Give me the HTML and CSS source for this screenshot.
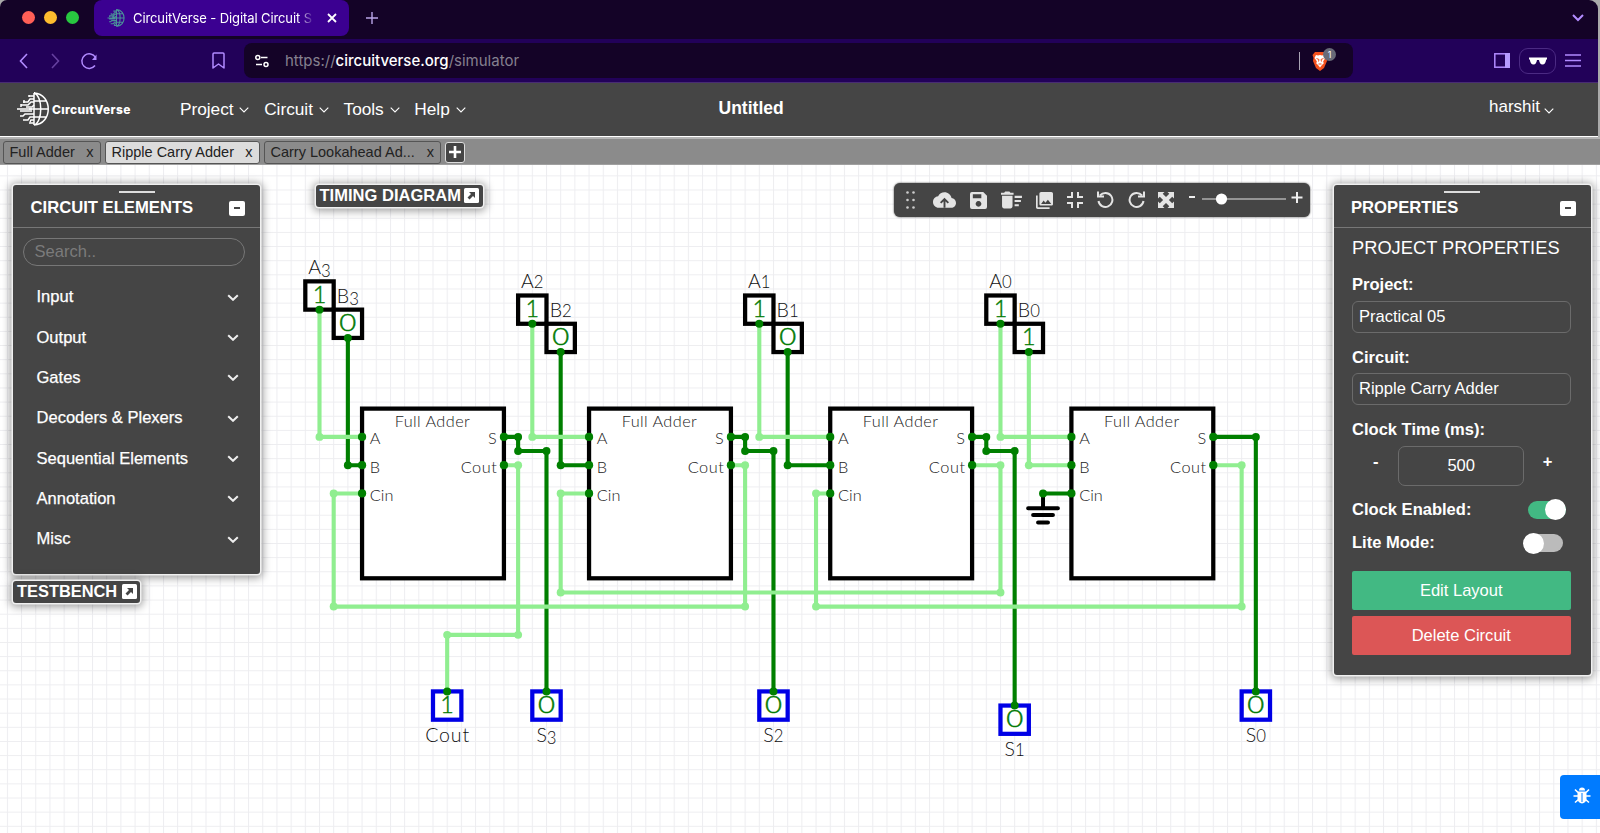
FILE: index.html
```html
<!DOCTYPE html>
<html lang="en">
<head>
<meta charset="utf-8">
<title>CircuitVerse - Digital Circuit Simulator</title>
<link rel="stylesheet" href="styles.css">
</head>
<body>
<div class="window">
  <div class="tabstrip">
    <div class="lights"><i class="red"></i><i class="yellow"></i><i class="green"></i></div>
    <div class="browser-tab">
      <svg class="favicon" width="18" height="18" viewBox="0 0 32 34" fill="none" stroke="#4b9299" stroke-width="2"><use href="#globe"/></svg>
      <span class="tab-title">CircuitVerse - Digital Circuit S</span>
      <svg width="10" height="10" viewBox="0 0 10 10" stroke="#fff" stroke-width="1.8"><path d="M1 1l8 8M9 1L1 9"/></svg>
    </div>
    <svg class="newtab" width="12" height="12" viewBox="0 0 12 12" stroke="#b9a5e8" stroke-width="1.4"><path d="M6 0v12M0 6h12"/></svg>
    <svg class="tabmenu" width="12" height="8" viewBox="0 0 12 8" fill="none" stroke="#b38cff" stroke-width="2"><path d="M1 1l5 5 5-5"/></svg>
  </div>
  <div class="navbar">
    <svg class="nav-back" width="9" height="16" viewBox="0 0 9 16" fill="none" stroke="#b18aff" stroke-width="1.6"><path d="M8 1L1.500 8 8 15"/></svg>
    <svg class="nav-fwd" width="9" height="16" viewBox="0 0 9 16" fill="none" stroke="#65409f" stroke-width="1.6"><path d="M1 1l6.500 7L1 15"/></svg>
    <svg class="nav-reload" width="18" height="18" viewBox="0 0 18 18" fill="none" stroke="#b18aff" stroke-width="1.5"><path d="M15 13.500A7.300 7.300 0 1 1 15.500 5.500"/><path d="M16.500 2.500v5.500h-4.500z" fill="#b18aff" stroke="none"/></svg>
    <svg class="nav-mark" width="13" height="17" viewBox="0 0 13 17" fill="none" stroke="#b18aff" stroke-width="1.5" stroke-linejoin="round"><path d="M1 2a1 1 0 0 1 1-1h9a1 1 0 0 1 1 1v14l-5.500-4L1 16z"/></svg>
    <div class="address">
      <svg width="14" height="14" viewBox="0 0 14 14" fill="none" stroke="#fff" stroke-width="1.5"><circle cx="2.800" cy="3.500" r="2"/><path d="M6 3.500h6.500M1 10.500h6"/><circle cx="11" cy="10.500" r="2"/></svg>
      <span class="url">https://<b>circuitverse.org</b>/simulator</span>
      <i class="sep"></i>
      <div class="shield">
        <svg width="16" height="20" viewBox="0 0 16 20"><path d="M3 1h10l2.500 3-1 3 .5 3-3 7-4 3-4-3-3-7 .5-3-1-3z" fill="#f4511e"/><path d="M4 4l2 .5L8 4l2 .5 2-.5 1.500 3L12 9l-1 2 1 1-2 2-2 2.500L6 14l-2-2 1-1-1-2-1.500-2z" fill="#fff"/><path d="M4.500 7.500l2.500 1-.5 2M11.500 7.500l-2.500 1 .5 2M6.500 13h3" stroke="#f4511e" fill="none"/></svg>
        <span class="badge">1</span>
      </div>
    </div>
    <svg class="sidebar-ic" width="16" height="15" viewBox="0 0 16 15"><rect x=".8" y=".8" width="14.400" height="13.400" fill="none" stroke="#b18aff" stroke-width="1.500"/><path d="M11 0h5v15h-5z" fill="#b69aff"/></svg>
    <span class="private"><svg width="18" height="8" viewBox="0 0 18 8" fill="#fff"><path d="M0 .5h18v2h-.8c-.4 3-1.500 5-3.700 5S10.500 5.500 10 3H8c-.5 2.500-1.300 4.500-3.500 4.500S1.200 5.500.8 2.500H0z"/></svg></span>
    <svg class="burger" width="16" height="13" viewBox="0 0 16 13" stroke="#b18aff" stroke-width="1.500"><path d="M0 1h16M0 6.500h16M0 12h16"/></svg>
  </div>
  <header class="header">
    <svg class="logo" width="32" height="34" viewBox="0 0 32 34" fill="none" stroke="#fff" stroke-width="1.500">
      <defs><g id="globe">
        <path d="M17 1v32M17 1c19 1 19 31 0 32M17 1c9 3 9 29 0 32M17 9h12M12 17h19M17 25h12"/>
        <path d="M17 4h-5M17 7h-4l-2 3H6M17 10h-3l-3 3H4M17 13l-2 2H9M15 17H0M15 19H3M17 22H8l-2 2H3M17 25h-4l-2 3H6M17 28h-3l-1 2M17 31h-5M12 3v2M7 8v3M4 12v3"/>
      </g></defs>
      <use href="#globe"/>
    </svg>
    <span class="brand">CırcuıtVerse</span>
    <nav class="menu">
      <span>Project<svg class="caret"><use href="#car"/></svg></span><span>Circuit<svg class="caret"><use href="#car"/></svg></span><span>Tools<svg class="caret"><use href="#car"/></svg></span><span>Help<svg class="caret"><use href="#car"/></svg></span>
    </nav>
    <strong class="doc-title">Untitled</strong>
    <span class="user">harshit<svg class="caret"><use href="#car"/></svg></span>
    <svg width="0" height="0"><defs><path id="car" d="M.7 .7l4.300 4.300L9.300 .7" fill="none" stroke="#fff" stroke-width="1.100"/><path id="chev" d="M1.200 1.200L6 5.800l4.800-4.600" fill="none" stroke="#eee" stroke-width="2"/></defs></svg>
  </header>
</div>

<div class="circuit-tabs">
  <div class="ctab"><span>Full Adder</span><span>x</span></div>
  <div class="ctab active"><span>Ripple Carry Adder</span><span>x</span></div>
  <div class="ctab wide"><span>Carry Lookahead Ad...</span><span>x</span></div>
  <button class="add"><svg width="12" height="12" viewBox="0 0 12 12" stroke="#fff" stroke-width="2.600"><path d="M6 0v12M0 6h12"/></svg></button>
</div>

<main class="workspace">
  <svg class="canvas" width="1600" height="668" viewBox="0 165 1600 668">
    <defs>
      <pattern id="grid" width="14.187" height="14.140" x="6.900" y="5.700" patternUnits="userSpaceOnUse"><path d="M.5 0v14.140M0 .5h14.187" stroke="#ededf0" fill="none"/></pattern>
      <g id="adder">
        <rect x="0" y="-20" width="100" height="120" fill="#fff" stroke="#000" stroke-width="3"/>
        <g class="pin"><text x="49.500" y="-7" text-anchor="middle" textLength="53">Full Adder</text><text x="5.500" y="5.300">A</text><text x="5.500" y="25.300">B</text><text x="5.500" y="45.300">Cin</text><text x="95" y="5.300" text-anchor="end">S</text><text x="95" y="25.300" text-anchor="end" textLength="25.500">Cout</text></g>
      </g>
      <g id="pins" fill="#008000"><circle r="2.900"/><circle cy="20" r="2.900"/><circle cy="40" r="2.900"/><circle cx="100" r="2.900"/><circle cx="100" cy="20" r="2.900"/></g>
      <g id="one" class="value"><text x="-4.800" y="5" textLength="9.600" lengthAdjust="spacingAndGlyphs">1</text></g>
      <g id="zero" class="value"><text x="-6" y="5" textLength="12" lengthAdjust="spacingAndGlyphs">0</text></g>
      <rect id="box" x="-10" y="-10" width="20" height="20" stroke-width="3"/>
    </defs>
    <rect y="165" width="1600" height="668" fill="url(#grid)"/>
    <g transform="translate(532.300 436.900) scale(1.4187 1.414)">
      <use href="#adder" x="-120"/><use href="#adder" x="40"/><use href="#adder" x="210"/><use href="#adder" x="380"/>
      <g fill="#fff" stroke="#000">
        <use href="#box" x="-150" y="-100"/><use href="#box" x="-130" y="-80"/>
        <use href="#box" x="0" y="-90"/><use href="#box" x="20" y="-70"/>
        <use href="#box" x="160" y="-90"/><use href="#box" x="180" y="-70"/>
        <use href="#box" x="330" y="-90"/><use href="#box" x="350" y="-70"/>
      </g>
      <g fill="#fff" stroke="#0000e6">
        <use href="#box" x="-60" y="190"/><use href="#box" x="10" y="190"/><use href="#box" x="170" y="190"/><use href="#box" x="340" y="200"/><use href="#box" x="510" y="190"/>
      </g>
      <g class="wire low">
        <path d="M-130-70V20H-120M20-60V20H40M180-60V20H210M-20 0H-10V10H10V180M140 0H150V10H170V180M310 0H320V10H340V190M480 0H510V180M360 40H380"/>
      </g>
      <g class="wire high">
        <path d="M-150-90V0H-120M0-80V0H40M160-80V0H210M330-80V0H380M350-60V20H380"/>
        <path d="M-20 20H-10V140H-60V180M140 20H150V120H-140V40H-120M310 20H330V110H20V40H40M480 20H500V120H200V40H210"/>
      </g>
      <path d="M360 40v10M349.500 50.500h21M353 55.300h14M356.500 60.500h7" stroke="#000" stroke-width="2.800" stroke-linecap="round"/>
      <g fill="#90ee90">
        <circle cx="-150" r="2.800"/><circle r="2.800"/><circle cx="160" r="2.800"/><circle cx="330" r="2.800"/><circle cx="350" cy="20" r="2.800"/>
        <circle cx="-10" cy="20" r="2.800"/><circle cx="-10" cy="140" r="2.800"/><circle cx="-60" cy="140" r="2.800"/>
        <circle cx="150" cy="20" r="2.800"/><circle cx="150" cy="120" r="2.800"/><circle cx="-140" cy="120" r="2.800"/><circle cx="-140" cy="40" r="2.800"/>
        <circle cx="330" cy="20" r="2.800"/><circle cx="330" cy="110" r="2.800"/><circle cx="20" cy="110" r="2.800"/><circle cx="20" cy="40" r="2.800"/>
        <circle cx="500" cy="20" r="2.800"/><circle cx="500" cy="120" r="2.800"/><circle cx="200" cy="120" r="2.800"/><circle cx="200" cy="40" r="2.800"/>
      </g>
      <use href="#pins" x="-120"/><use href="#pins" x="40"/><use href="#pins" x="210"/><use href="#pins" x="380"/>
      <g fill="#008000">
        <circle cx="-150" cy="-90" r="2.800"/><circle cx="-130" cy="-70" r="2.800"/><circle cy="-80" r="2.800"/><circle cx="20" cy="-60" r="2.800"/><circle cx="160" cy="-80" r="2.800"/><circle cx="180" cy="-60" r="2.800"/><circle cx="330" cy="-80" r="2.800"/><circle cx="350" cy="-60" r="2.800"/>
        <circle cx="-130" cy="20" r="2.800"/><circle cx="20" cy="20" r="2.800"/><circle cx="180" cy="20" r="2.800"/><circle cx="360" cy="40" r="2.800"/><circle cx="510" r="2.800"/>
        <circle cx="-10" r="2.800"/><circle cx="-10" cy="10" r="2.800"/><circle cx="10" cy="10" r="2.800"/>
        <circle cx="150" r="2.800"/><circle cx="150" cy="10" r="2.800"/><circle cx="170" cy="10" r="2.800"/>
        <circle cx="320" r="2.800"/><circle cx="320" cy="10" r="2.800"/><circle cx="340" cy="10" r="2.800"/>
        <circle cx="-60" cy="180" r="2.800"/><circle cx="10" cy="180" r="2.800"/><circle cx="170" cy="180" r="2.800"/><circle cx="340" cy="190" r="2.800"/><circle cx="510" cy="180" r="2.800"/>
      </g>
      <use href="#one" x="-150" y="-100"/><use href="#zero" x="-130" y="-80"/><use href="#one" x="0" y="-90"/><use href="#zero" x="20" y="-70"/>
      <use href="#one" x="160" y="-90"/><use href="#zero" x="180" y="-70"/><use href="#one" x="330" y="-90"/><use href="#one" x="350" y="-70"/>
      <use href="#one" x="-60" y="190"/><use href="#zero" x="10" y="190"/><use href="#zero" x="170" y="190"/><use href="#zero" x="340" y="200"/><use href="#zero" x="510" y="190"/>
      <g class="label">
        <text x="-150" y="-115">A<tspan class="d" dy="2">3</tspan></text><text x="-130" y="-95">B<tspan class="d" dy="2">3</tspan></text>
        <text x="0" y="-105">A<tspan class="d">2</tspan></text><text x="20" y="-85">B<tspan class="d">2</tspan></text>
        <text x="160" y="-105">A<tspan class="d">1</tspan></text><text x="180" y="-85">B<tspan class="d">1</tspan></text>
        <text x="330" y="-105">A<tspan class="d">0</tspan></text><text x="350" y="-85">B<tspan class="d">0</tspan></text>
        <text x="-60" y="215.500" textLength="31">Cout</text><text x="10" y="215.500">S<tspan class="d" dy="2">3</tspan></text><text x="170" y="215.500">S<tspan class="d">2</tspan></text><text x="340" y="225.500">S<tspan class="d">1</tspan></text><text x="510" y="215.500">S<tspan class="d">0</tspan></text>
      </g>
    </g>
  </svg>

  <section class="panel elements">
    <i class="grip"></i>
    <div class="panel-head"><span>CIRCUIT ELEMENTS</span><i class="min"></i></div>
    <div class="search">Search..</div>
    <ul>
      <li>Input<svg class="chev"><use href="#chev"/></svg></li>
      <li>Output<svg class="chev"><use href="#chev"/></svg></li>
      <li>Gates<svg class="chev"><use href="#chev"/></svg></li>
      <li>Decoders &amp; Plexers<svg class="chev"><use href="#chev"/></svg></li>
      <li>Sequential Elements<svg class="chev"><use href="#chev"/></svg></li>
      <li>Annotation<svg class="chev"><use href="#chev"/></svg></li>
      <li>Misc<svg class="chev"><use href="#chev"/></svg></li>
    </ul>
  </section>
  <div class="panel mini testbench">TESTBENCH<svg width="15" height="15" viewBox="0 0 15 15"><rect width="15" height="15" rx="1.500" fill="#fff"/><path d="M5 4h6v6L9 8l-3.500 3.500-2-2L7 6z" fill="#454545"/></svg></div>
  <div class="panel mini timing">TIMING DIAGRAM<svg width="15" height="15" viewBox="0 0 15 15"><rect width="15" height="15" rx="1.500" fill="#fff"/><path d="M5 4h6v6L9 8l-3.500 3.500-2-2L7 6z" fill="#454545"/></svg></div>

  <div class="quick">
    <svg class="dots" width="9" height="18" viewBox="0 0 9 18" fill="#ccc"><circle cx="1.500" cy="1.500" r="1.300"/><circle cx="7.500" cy="1.500" r="1.300"/><circle cx="1.500" cy="9" r="1.300"/><circle cx="7.500" cy="9" r="1.300"/><circle cx="1.500" cy="16.500" r="1.300"/><circle cx="7.500" cy="16.500" r="1.300"/></svg>
    <svg width="23" height="18" viewBox="0 3 24 18"><path d="M19.350 10.040C18.670 6.590 15.640 4 12 4 9.110 4 6.600 5.640 5.350 8.040 2.340 8.360 0 10.910 0 14c0 3.310 2.690 6 6 6h13c2.760 0 5-2.240 5-5 0-2.640-2.050-4.780-4.650-4.960z"/><path d="M12 20v-8M8 15l4-4 4 4" fill="none" stroke="#454545" stroke-width="2"/></svg>
    <svg width="17" height="17" viewBox="3 3 18 18"><path fill-rule="evenodd" d="M3 5a2 2 0 0 1 2-2h12l4 4v12a2 2 0 0 1-2 2H5a2 2 0 0 1-2-2zM6 5.500v4h9v-4zM12 12.500a3 3 0 1 0 .01 0z"/></svg>
    <svg class="sweep" width="22" height="18" viewBox="2 3.500 21 17"><path d="M15 16h4v2h-4zm0-8h7v2h-7zm0 4h6v2h-6zM3 18c0 1.100.9 2 2 2h6c1.100 0 2-.9 2-2V8H3v10zM14 5h-3l-1-1H6L5 5H2v2h12z"/></svg>
    <svg width="17" height="17" viewBox="2 2 20 20"><path d="M22 16V4c0-1.100-.9-2-2-2H8c-1.100 0-2 .9-2 2v12c0 1.100.9 2 2 2h12c1.100 0 2-.9 2-2zm-11-4l2.030 2.710L16 11l4 5H8l3-4zM2 6v14c0 1.100.9 2 2 2h14v-2H4V6H2z"/></svg>
    <svg width="16" height="16" viewBox="0 0 16 16"><path d="M5 0v5H0M11 0v5h5M5 16v-5H0M11 16v-5h5" fill="none" stroke="#e4e4e4" stroke-width="2"/></svg>
    <svg width="17" height="18" viewBox="0 0 17 18"><path d="M3 4.500A7 7 0 1 1 1.500 10" fill="none" stroke="#e4e4e4" stroke-width="2"/><path d="M0 .5h2v4h5v2H0z"/></svg>
    <svg width="17" height="18" viewBox="0 0 17 18"><path d="M14 4.500A7 7 0 1 0 15.500 10" fill="none" stroke="#e4e4e4" stroke-width="2"/><path d="M17 .5h-2v4h-5v2h7z"/></svg>
    <svg width="16" height="16" viewBox="0 0 16 16"><path d="M0 0h6.500L4.700 1.800 8 5.100l3.300-3.300L9.500 0H16v6.500l-1.800-1.800L10.900 8l3.300 3.300L16 9.500V16H9.500l1.800-1.800L8 10.900l-3.300 3.300L6.500 16H0V9.500l1.800 1.800L5.100 8 1.800 4.700 0 6.500z"/></svg>
    <svg class="zoom" width="116" height="16" viewBox="0 0 116 16"><path d="M1 7h6M103.500 7.500h11M109 2v11" stroke="#eee" stroke-width="2"/><path d="M14 9h84" stroke="#e4e4e4" stroke-width="1.200"/><circle cx="33.500" cy="9" r="5.600" fill="#fff"/></svg>
  </div>

  <section class="panel props">
    <i class="grip"></i>
    <div class="panel-head"><span>PROPERTIES</span><i class="min"></i></div>
    <div class="body">
      <h2>PROJECT PROPERTIES</h2>
      <label>Project:</label><div class="field">Practical 05</div>
      <label>Circuit:</label><div class="field">Ripple Carry Adder</div>
      <label class="ct">Clock Time (ms):</label>
      <div class="clock"><b>-</b><div class="num">500</div><b>+</b></div>
      <div class="row"><b>Clock Enabled:</b><span class="switch on"><i></i></span></div>
      <div class="row second"><b>Lite Mode:</b><span class="switch"><i></i></span></div>
      <button class="btn edit">Edit Layout</button>
      <button class="btn del">Delete Circuit</button>
    </div>
  </section>

  <button class="bug"><svg width="18" height="18" viewBox="0 0 18 18"><path d="M6 4.500a3 3 0 0 1 6 0z" fill="#fff"/><path d="M4.500 5.500h9v7a4.500 5 0 0 1-9 0z" fill="#fff"/><path d="M2 3.500l3 3M16 3.500l-3 3M.5 10h17M2 16.500l3.500-3M16 16.500l-3.500-3" stroke="#fff" stroke-width="1.600"/><path d="M9 7v9" stroke="#007bff"/></svg></button>
</main>
</body>
</html>
```
FILE: styles.css
```css
* { box-sizing: border-box; }
body { margin: 0; width: 1600px; height: 833px; overflow: hidden; background: #aaa; font-family: "Liberation Sans", Arial, sans-serif; color: #fff; }
svg { display: block; flex: none; }
ul { list-style: none; margin: 0; padding: 0; }
button { border: 0; padding: 0; color: inherit; font: inherit; }

.window { width: 1598px; height: 137px; border-bottom: 1px solid #fff; border-radius: 7px 9px 0 0; overflow: hidden; }
.tabstrip { height: 39px; display: flex; background: #140327; font-family: Inter, sans-serif; }
.lights { display: flex; gap: 8.500px; padding: 11px 0 0 22px; width: 94px; }
.lights i { width: 13.400px; height: 13.400px; border-radius: 50%; }
.red { background: #ff5f57; }
.yellow { background: #febc2e; }
.green { background: #28c840; }
.browser-tab { width: 255px; height: 36px; border-radius: 8px; background: #3b0091; display: flex; align-items: center; padding-left: 13px; }
.tab-title { margin-left: 8px; width: 183px; margin-right: 11px; font-size: 13px; letter-spacing: -.1px; white-space: nowrap; overflow: hidden; -webkit-mask-image: linear-gradient(90deg, #000 90%, transparent 99%); }
.newtab { margin: 12px 0 0 16.500px; }
.tabmenu { margin: 14px 14px 0 auto; }
.navbar { height: 44px; display: flex; align-items: center; background: #220159; border-bottom: 1px solid #482b73; }
.nav-back { margin-left: 19px; }
.nav-fwd { margin-left: 23px; }
.nav-reload { margin-left: 20px; }
.nav-mark { margin-left: 114px; }
.address { margin-left: 19px; width: 1109px; height: 35px; border-radius: 8px; background: #140327; display: flex; align-items: center; padding-left: 11px; font-family: Inter, sans-serif; }
.url { margin-left: 16px; font-size: 15px; color: #85808f; }
.url b { color: #fff; font-weight: 500; }
.sep { margin-left: auto; width: 1px; height: 18px; background: #a8a3b3; }
.shield { margin: 0 17px 0 12px; width: 24px; height: 20px; position: relative; }
.badge { position: absolute; left: 11px; top: -3px; width: 13px; height: 13px; border-radius: 50%; background: #686a78; font-size: 9px; line-height: 13px; text-align: center; }
.sidebar-ic { margin-left: 141px; }
.private { margin-left: 9px; width: 37px; height: 26px; border: 1px solid #4b2a83; border-radius: 9px; display: flex; align-items: center; justify-content: center; }
.burger { margin-left: 9px; }

.header { height: 53px; background: #454545; display: flex; align-items: center; font-size: 17.300px; position: relative; }
.logo { margin: 0 0 2px 17px; }
.brand { margin-left: 3px; width: 82px; font: 800 12px Inter, sans-serif; letter-spacing: .35px; }
.menu { display: flex; margin: 0 0 0 46px; gap: 14.800px; letter-spacing: -.03px; }
.menu span, .user { display: flex; align-items: center; }
.caret { width: 10px; height: 6px; margin-left: 5.800px; overflow: visible; }
.doc-title { margin-left: 253px; margin-top: -3px; font-size: 17.500px; }
.user { margin: -5px 44px 0 auto; font-size: 17px; }
.user .caret { margin-top: 7px; margin-left: 4px; }

.circuit-tabs { height: 28px; background: #8b8b8b; border-top: 2px solid #b4b4b4; border-bottom: 1px solid #a0a0a0; display: flex; align-items: center; gap: 4.500px; padding: 1px 0 0 3px; font-size: 14.500px; color: #222; }
.ctab { flex: none; width: 97.500px; height: 23px; border: 1.500px solid #555; border-radius: 3px; display: flex; justify-content: space-between; align-items: flex-start; line-height: 20px; padding: 0 6px 0 5.500px; white-space: nowrap; }
.ctab.active { width: 154.500px; background: #dcdcdc; }
.ctab.wide { width: 177px; }
.add { width: 20px; height: 21px; margin-left: -1px; border: 1px solid #ddd; border-radius: 3px; background: #454545; display: flex; align-items: center; justify-content: center; }

.workspace { position: relative; height: 668px; background: #fff; }
.pin text { font: 300 11.500px Lato, sans-serif; fill: #222; }
.value text { font: 300 16px Lato, sans-serif; fill: #007800; stroke: #0a7f0a; stroke-width: .3; }
.label text { font: 300 13.800px Lato, sans-serif; fill: #111; text-anchor: middle; }
.label text .d { font-size: 11.800px; }
.wire { fill: none; stroke-width: 2.900; }
.low { stroke: #007f00; }
.high { stroke: #90ee90; }

.panel { position: absolute; background: #454545; border-radius: 3px; box-shadow: 0 0 0 1.500px #f0f0f0, 0 1px 9px 3px rgba(0, 0, 0, .38); font-size: 16.550px; }
.elements { left: 13px; top: 20px; width: 247px; height: 389px; }
.props { left: 1333.500px; top: 20px; width: 257px; height: 490px; }
.grip { position: absolute; left: 50%; margin-left: -18px; top: 6px; width: 36px; height: 1.500px; background: #ddd; }
.panel-head { height: 43px; border-bottom: 1px solid #777; display: flex; justify-content: space-between; align-items: center; padding: 4px 15px 0 17.500px; font-weight: bold; font-size: 16.650px; }
.min { width: 16px; height: 15px; border-radius: 2px; background: #fff; display: flex; align-items: center; justify-content: center; }
.min::before { content: ""; width: 6px; height: 1.500px; background: #454545; }
.search { margin: 10px 15px 0 10px; height: 28px; border: 1px solid #777; border-radius: 14px; padding-left: 10.500px; line-height: 25px; color: #7b7b7b; }
.elements ul { padding: 11px 21px 0 23.500px; }
.elements li { height: 40.350px; display: flex; align-items: center; justify-content: space-between; -webkit-text-stroke: .25px #fff; }
.chev { width: 12px; height: 7px; }
.mini { display: flex; align-items: center; font-weight: bold; padding: 0 4px; white-space: nowrap; justify-content: space-between; }
.testbench { left: 13px; top: 416px; width: 126.500px; height: 21.500px; padding-right: 3px; font-size: 16.400px; }
.timing { left: 315.500px; top: 20px; width: 167.500px; height: 21.500px; }

.quick { position: absolute; left: 893.500px; top: 18px; width: 416.500px; height: 34px; border-radius: 6px; background: #454545; box-shadow: 0 0 2px #333; display: flex; align-items: center; padding: 0 6px 0 12px; justify-content: space-between; fill: #e4e4e4; }
.dots { margin-right: 5px; }
.zoom { margin: -5px 0 0 0; }

.body { padding: 0 20px 0 18.500px; }
.body h2 { margin: 8px 0 0; font-weight: normal; font-size: 18.300px; line-height: 23px; white-space: nowrap; }
.body label { display: block; font-weight: bold; height: 20px; line-height: 20px; margin: 16px 0 6px; }
.field { height: 32px; border: 1px solid #6b6b6b; border-radius: 6px; line-height: 29px; padding-left: 6px; }
.field + label { margin: 15px 0 5px; }
.field + .ct { margin: 15px 0 5.500px; }
.clock { display: flex; justify-content: space-between; padding: 0 18px 0 21px; line-height: 32px; }
.num { width: 126px; height: 40px; border: 1px solid #6b6b6b; border-radius: 7px; text-align: center; line-height: 37px; margin-left: 1px; }
.row { display: flex; justify-content: space-between; align-items: center; height: 20px; margin-top: 14px; padding-right: 5px; }
.second { margin-top: 13.500px; padding-right: 8px; }
.switch { width: 38px; height: 18px; border-radius: 9px; background: #bbb; display: flex; align-items: center; }
.switch i { width: 21px; height: 21px; flex: none; border-radius: 50%; background: #fff; margin-left: -2px; }
.switch.on { background: #42b983; justify-content: flex-end; }
.btn { display: block; width: 100%; height: 39px; border-radius: 2px; line-height: 38px; }
.edit { margin-top: 18px; background: #42b983; }
.del { margin-top: 6px; background: #dc5656; }
.bug { position: absolute; left: 1560px; top: 609.500px; width: 44px; height: 44px; border-radius: 4px; background: #007bff; padding: 0 0 3px 13px; }
```
